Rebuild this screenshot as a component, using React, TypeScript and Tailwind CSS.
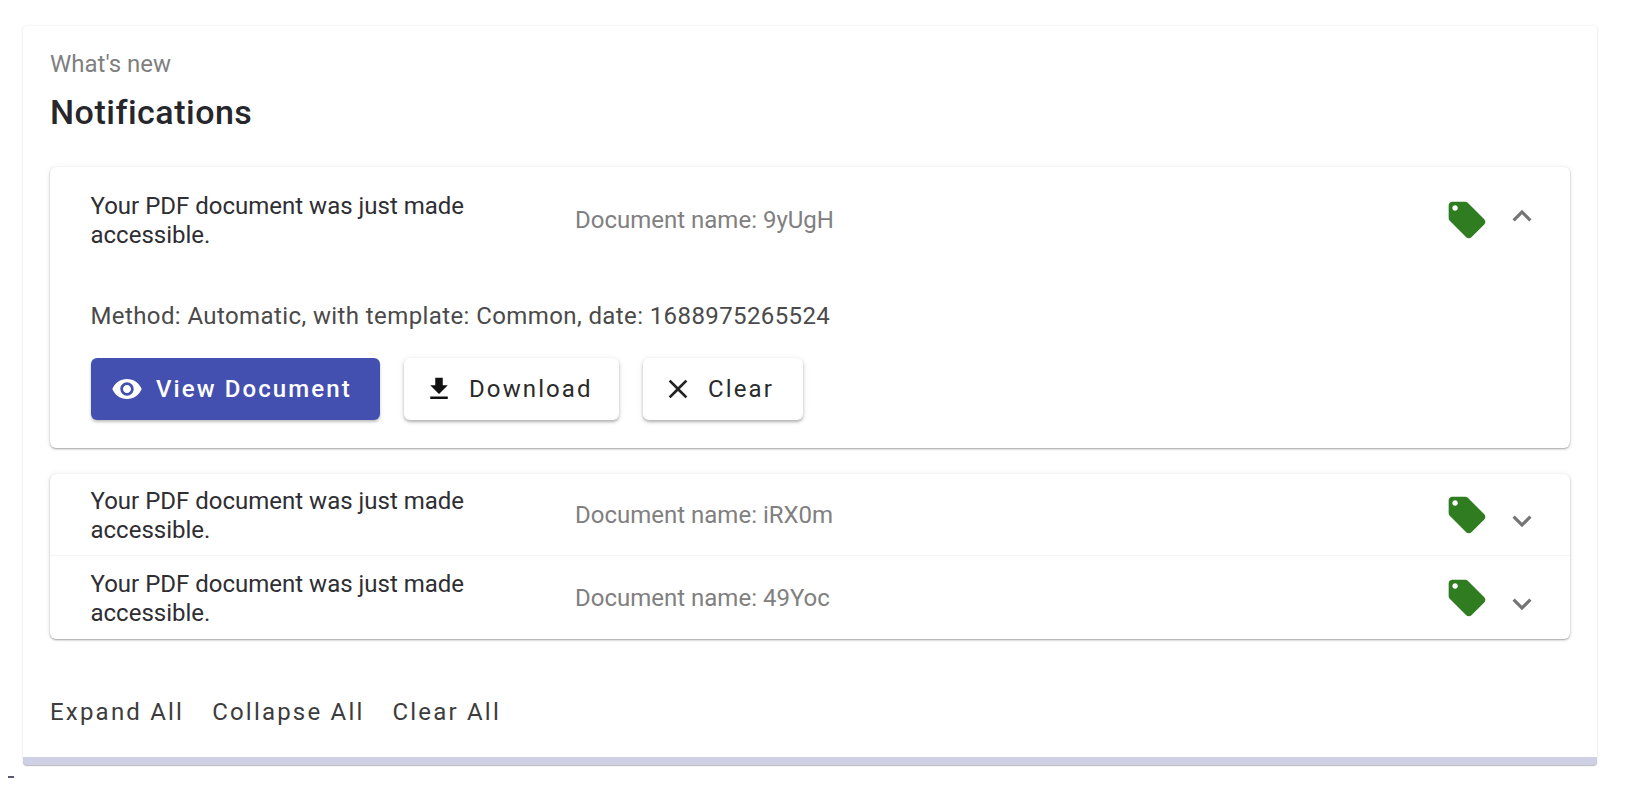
const font = { fontFamily: 'Roboto, sans-serif' };

const tagPath =
  'M21.41 11.58l-9-9C12.05 2.22 11.55 2 11 2H4c-1.1 0-2 .9-2 2v7c0 .55.22 1.05.59 1.42l9 9c.36.36.86.58 1.41.58.55 0 1.05-.22 1.41-.59l7-7c.37-.36.59-.86.59-1.41 0-.55-.23-1.06-.59-1.42zM5.5 7C4.67 7 4 6.33 4 5.5S4.67 4 5.5 4 7 4.67 7 5.5 6.33 7 5.5 7z';
const eyePath =
  'M12 4.5C7 4.5 2.73 7.61 1 12c1.73 4.39 6 7.5 11 7.5s9.27-3.11 11-7.5c-1.73-4.39-6-7.5-11-7.5zM12 17c-2.76 0-5-2.24-5-5s2.24-5 5-5 5 2.24 5 5-2.24 5-5 5zm0-8c-1.66 0-3 1.34-3 3s1.34 3 3 3 3-1.34 3-3-1.34-3-3-3z';
const downloadPath = 'M19 9h-4V3H9v6H5l7 7 7-7zM5 18v2h14v-2H5z';
const closePath =
  'M19 6.41L17.59 5 12 10.59 6.41 5 5 6.41 10.59 12 5 17.59 6.41 19 12 13.41 17.59 19 19 17.59 13.41 12z';
const downPath = 'M16.59 8.59L12 13.17 7.41 8.59 6 10l6 6 6-6z';
const upPath = 'M12 8l-6 6 1.41 1.41L12 10.83l4.59 4.58L18 14z';

const Icon = ({ d, className }: { d: string; className: string }) => (
  <svg viewBox="0 0 24 24" fill="currentColor" className={className}>
    <path d={d} />
  </svg>
);

const Row = ({ doc, open, className }: { doc: string; open?: boolean; className: string }) => (
  <div className={`flex items-center pl-[40.5px] pr-[29px] ${className}`}>
    <div className="w-[484.5px] shrink-0 pr-[90px] pt-[2px] text-[24px] leading-[29px] text-[#2e2e33]">
      Your PDF document was just made accessible.
    </div>
    <div className="flex-1 text-[24px] text-[#808080]">Document name: {doc}</div>
    <Icon d={tagPath} className="h-[44px] w-[44px] text-[#2f7d20]" />
    <Icon
      d={open ? upPath : downPath}
      className={`ml-[14px] h-[38px] w-[38px] text-[#757575] ${open ? '-translate-y-[4px]' : 'translate-y-[6px]'}`}
    />
  </div>
);

const LightButton = ({ d, label, iconClass, className }: { d: string; label: string; iconClass: string; className: string }) => (
  <button className={`flex h-[62px] items-center rounded-[6px] bg-white text-[24px] tracking-[2.1px] text-[#2a2a2a] shadow-[0_2px_3px_rgba(0,0,0,0.25),0_1px_6px_rgba(0,0,0,0.1)] ${className}`}>
    <Icon d={d} className={iconClass} />
    {label}
  </button>
);

export default function App() {
  return (
    <div className="min-h-[800px] bg-white pl-[23px] pr-[35px] pt-[26px]" style={font}>
      <div className="rounded-[4px] border-b-[8px] border-[#cfcfe6] bg-white px-[27px] pb-[30px] pt-[24px] shadow-[0_0_3px_rgba(0,0,0,0.08),0_1px_1px_rgba(0,0,0,0.25)]">
        <div className="text-[24px] leading-[28px] text-[#7f7f7f]">What's new</div>
        <h1 className="mt-[14px] text-[34px] font-medium leading-[40px] tracking-[0.5px] text-[#26262b]">Notifications</h1>

        <div className="mt-[35px] rounded-[6px] bg-white pb-[28px] shadow-[0_1px_2px_rgba(0,0,0,0.35),0_0_6px_rgba(0,0,0,0.07)]">
          <Row doc="9yUgH" open className="h-[103px] pt-[2px]" />
          <div className="mt-[32px] pl-[40.5px] text-[24px] leading-[29px] tracking-[0.4px] text-[#4a4a4a]">
            Method: Automatic, with template: Common, date: 1688975265524
          </div>
          <div className="mt-[27px] flex gap-[24px] pl-[41px]">
            <button className="flex h-[62px] w-[289px] items-center gap-[13px] rounded-[6px] bg-[#4450b0] pl-[20px] text-[24px] font-medium tracking-[2.1px] text-white shadow-[0_2px_3px_rgba(0,0,0,0.25)]">
              <Icon d={eyePath} className="h-[32px] w-[32px]" />
              View Document
            </button>
            <LightButton d={downloadPath} label="Download" iconClass="h-[30px] w-[30px] text-[#111]" className="w-[215px] gap-[15px] pl-[20px]" />
            <LightButton d={closePath} label="Clear" iconClass="h-[32px] w-[32px] text-[#222]" className="w-[160px] gap-[14px] pl-[19px]" />
          </div>
        </div>

        <div className="mt-[26px] rounded-[6px] bg-white shadow-[0_1px_2px_rgba(0,0,0,0.35),0_0_6px_rgba(0,0,0,0.07)]">
          <Row doc="iRX0m" className="h-[82px] border-b border-[#f5f5f5]" />
          <Row doc="49Yoc" className="h-[83px]" />
        </div>

        <div className="mt-[58px] flex gap-[28px] text-[24px] leading-[30px] tracking-[2.2px] text-[#3c3c3c]">
          <span>Expand All</span>
          <span>Collapse All</span>
          <span>Clear All</span>
        </div>
      </div>
      <div className="-ml-[15px] mt-[11px] h-[2px] w-[6px] bg-[#555a70]" />
    </div>
  );
}
